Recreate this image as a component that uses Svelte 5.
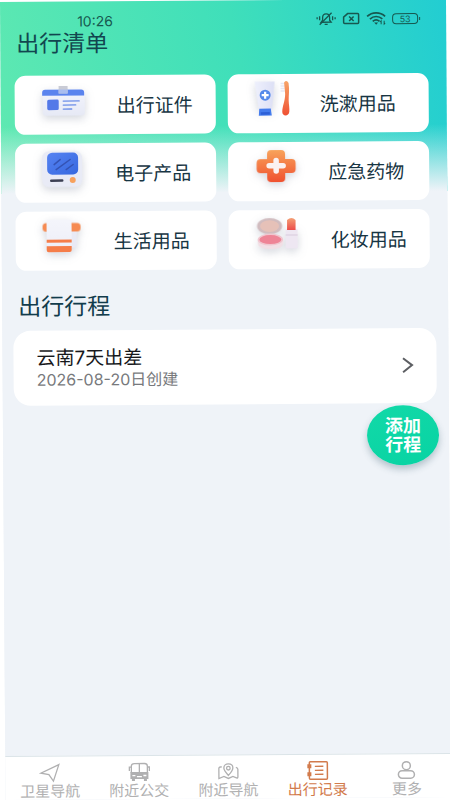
<script>
  let categories = [
    { name: '出行证件', icon: 'card', width: 62 },
    { name: '洗漱用品', icon: 'wash', width: 52 },
    { name: '电子产品', icon: 'device', width: 60 },
    { name: '应急药物', icon: 'medicine', width: 60 },
    { name: '生活用品', icon: 'towel', width: 58 },
    { name: '化妆用品', icon: 'makeup', width: 62 }
  ];

  let trips = [{ title: '云南7天出差', created: '2026-08-20' }];

  let tabs = [
    { name: '卫星导航', icon: 'arrow' },
    { name: '附近公交', icon: 'bus' },
    { name: '附近导航', icon: 'map' },
    { name: '出行记录', icon: 'record' },
    { name: '更多', icon: 'person' }
  ];

  let active = 'record';
</script>

<div class="screen">
  <div class="page">
    <header class="status">
      <span>10:26</span>
      <div class="status-icons">
        <svg width="20" height="14" viewBox="0 0 20 14" fill="none" stroke="currentColor" stroke-width="1.3">
          <path d="M5 10.500H15L13.500 8.500V6C13.500 3.500 12 2.200 10 2.200S6.500 3.500 6.500 6V8.500Z" />
          <path d="M8.500 12.700H11.500M3.500 13L15.500 1M3.500 4.500V8.500M1 5.500V7.500M16.500 4.500V8.500M19 5.500V7.500" />
        </svg>
        <svg width="18" height="14" viewBox="0 0 18 14" fill="none" stroke="currentColor" stroke-width="1.500">
          <path d="M5.500 2H15.500Q16.500 2 16.500 3V11Q16.500 12 15.500 12H2.500Q1.500 12 1.500 11V5.500Z" />
          <path d="M7 5L11.500 9.500M11.500 5L7 9.500" />
        </svg>
        <svg width="20" height="14" viewBox="0 0 20 14" fill="none" stroke="currentColor" stroke-width="1.700">
          <path d="M1 5C6 .3 14 .3 19 5M3.800 7.600C7.500 4.300 12.500 4.300 16.200 7.600M6.600 10C8.800 8.200 11.200 8.200 13.400 10" />
          <path d="M8 11.200L10 13.500L12 11.200Z" fill="currentColor" stroke="none" />
          <path d="M15 12.800V9.500L14 10.500M18 9.500V12.800L19 11.800" stroke-width="1" />
        </svg>
        <span class="battery">53</span>
      </div>
    </header>

    <h1>出行清单</h1>

    <div class="grid">
      {#each categories as { name, icon, width }}
        <button class="category">
          <svg {width} height="50" viewBox="0 0 {width} 50">
            {#if icon === 'card'}
              <linearGradient id="paper" x2="0" y2="1"><stop stop-color="#f3f5fd" /><stop offset="1" stop-color="#e6e9f5" /></linearGradient>
              <g class="lifted">
                <rect x="8" y="10" width="42" height="26" rx="3" fill="url(#paper)" />
              </g>
              <path d="M7.500 16V13Q7.500 10 10.500 10H46.500Q49.500 10 49.500 13V16Z" fill="#5b84ee" />
              <rect x="24" y="6.500" width="9" height="7.500" fill="#c9cbd5" />
              <rect x="24" y="10" width="9" height="4" fill="#a9bdf0" />
              <rect x="12.500" y="20" width="11.500" height="10.500" rx="1.500" fill="#5479e8" />
              <path d="M28.500 21.500H44.500M28.500 25.500H41M28.500 29.500H37" stroke="#6b8de8" stroke-width="1.300" stroke-linecap="round" />
            {:else if icon === 'wash'}
              <linearGradient id="tube" x2="1" y2="0"><stop stop-color="#eef0fc" /><stop offset="1" stop-color="#dcdff5" /></linearGradient>
              <linearGradient id="handle" x2="0" y2="1"><stop stop-color="#f7a468" /><stop offset="1" stop-color="#ef5133" /></linearGradient>
              <g class="lifted">
                <path d="M7 3.500H27L24 32H11Z" fill="url(#tube)" />
              </g>
              <path d="M11.500 30.500H23L24 37.500H11Z" fill="#437bed" />
              <path d="M13 34H22V36.500H13Z" fill="#2c5fd6" />
              <circle cx="17.500" cy="17" r="5.500" fill="#5489ea" />
              <path d="M17.500 13.500V20.500M14 17H21" stroke="#fff" stroke-width="2.200" />
              <path d="M33 5.500H37M33 8H37M33 10.500H37M33 13H37" stroke="#e6e8f3" stroke-width="1.500" />
              <path d="M36.500 4.500Q39 1.500 41 5C42 12 41 17 41 22C41 27 42 30 41.500 34C41 38.500 34.500 38.500 34.500 34C34.500 28 37.500 23 37.500 16Z" fill="url(#handle)" />
            {:else if icon === 'device'}
              <linearGradient id="glass" x2="1" y2="1"><stop stop-color="#5683f2" /><stop offset="1" stop-color="#3768df" /></linearGradient>
              <g class="lifted">
                <rect x="7" y="3.500" width="40" height="36" rx="7" fill="#e9ebf6" />
              </g>
              <rect x="12" y="5" width="31" height="22" rx="5" fill="url(#glass)" />
              <path d="M19 17L25 12M21 22L35 12M31 22L38 17" stroke="#3453b4" stroke-width="1.500" stroke-linecap="round" />
              <path d="M16 33H27" stroke="#3c4054" stroke-width="2.500" stroke-linecap="round" />
              <circle cx="37.500" cy="32.500" r="3" fill="#f7a15d" />
            {:else if icon === 'medicine'}
              <linearGradient id="cross" x2="0" y2="1"><stop stop-color="#f8a35b" /><stop offset="1" stop-color="#f0512f" /></linearGradient>
              <g class="lifted">
                <path d="M23 4H33Q37 4 37 8V13H43.500Q47.500 13 47.500 17V23Q47.500 27 43.500 27H37V32Q37 36 33 36H23Q19 36 19 32V27H12.500Q8.500 27 8.500 23V17Q8.500 13 12.500 13H19V8Q19 4 23 4Z" fill="url(#cross)" />
              </g>
              <path d="M28 14.500V25M21 19.700H35" stroke="#fbf1f0" stroke-width="5.500" stroke-linecap="round" />
            {:else if icon === 'towel'}
              <linearGradient id="cloth" x2="0" y2="1"><stop stop-color="#f4f5fb" /><stop offset="1" stop-color="#edeef8" /></linearGradient>
              <g class="lifted">
                <rect x="34" y="11" width="7" height="21" rx="2" fill="#e9eaf5" />
                <rect x="7" y="7.500" width="38" height="8.500" rx="3.500" fill="#f68b52" />
                <rect x="11" y="4" width="25" height="32.500" rx="2" fill="url(#cloth)" />
              </g>
              <path d="M11 24H36V27H11Z" fill="#f57d49" />
              <path d="M11 30.500H36V34.500Q36 36.500 34 36.500H13Q11 36.500 11 34.500Z" fill="#f57d49" />
            {:else}
              <linearGradient id="stick" x2="0" y2="1"><stop stop-color="#f4a075" /><stop offset="1" stop-color="#ec4d4a" /></linearGradient>
              <g class="lifted">
                <ellipse cx="21" cy="12" rx="12.500" ry="8" fill="#d1bcbf" />
                <path d="M9 25.500H34.500V29Q34 35 21.700 35T9 29Z" fill="#f1dfe5" />
                <rect x="37" y="15" width="12" height="19.500" rx="1" fill="#eee7f2" />
              </g>
              <ellipse cx="21" cy="12" rx="9.500" ry="5.800" fill="#e6c1b8" />
              <ellipse cx="21.700" cy="25.500" rx="12.700" ry="6" fill="#f0c6cf" />
              <ellipse cx="21.700" cy="25.500" rx="11" ry="4.500" fill="#ee8496" />
              <path d="M38.500 6Q43 2 47 6V16H38.500Z" fill="url(#stick)" />
              <path d="M37 21H49" stroke="#d8ccdc" stroke-width="1" />
            {/if}
          </svg>
          <span>{name}</span>
        </button>
      {/each}
    </div>

    <h2>出行行程</h2>

    {#each trips as { title, created }}
      <button class="trip">
        <span class="trip-text">
          <strong>{title}</strong>
          <small>{created}日创建</small>
        </span>
        <svg width="12" height="18" viewBox="0 0 12 18" fill="none" stroke="#5d5f63" stroke-width="2">
          <path d="M1.500 2L10.500 9L1.500 16" />
        </svg>
      </button>
    {/each}

    <button class="add">添加<br />行程</button>

    <nav>
      {#each tabs as { name, icon }}
        <a href="#{icon}" class:active={icon === active}>
          <svg width="24" height="20" viewBox="0 0 24 20" fill="none" stroke="currentColor" stroke-width="1.300">
            {#if icon === 'arrow'}
              <path d="M20.500 2L2.500 10.500L10.500 12L15 18.500Z" />
            {:else if icon === 'bus'}
              <path d="M4 11V4Q4 1.500 7 1.500H17Q20 1.500 20 4V11M12 1.500V11M4 5H2V9M20 5H22V9" />
              <path d="M3 10H21V17H19.500V19H16.500V17H7.500V19H4.500V17H3Z" fill="currentColor" stroke="none" />
              <path d="M5 13.500H8M16 13.500H19M9.500 14.500H14.500" stroke="#fff" />
            {:else if icon === 'map'}
              <path d="M12 14C9 10.500 7.500 8.800 7.500 6.500C7.500 4 9.500 2.500 12 2.500S16.500 4 16.500 6.500C16.500 8.800 15 10.500 12 14Z" />
              <circle cx="12" cy="6.800" r="1.800" />
              <path d="M5.500 5.500H4Q2.500 5.500 2.500 7V17L7.500 15L12 17L16.500 15L20 16.500Q21.500 17 21.500 15.500V8Q21.500 6.500 19.500 6" />
            {:else if icon === 'record'}
              <rect x="4" y="1" width="18" height="17.500" rx="1" stroke-width="1.500" />
              <path d="M9.500 5.500H18M9.500 9.500H18M9.500 13.500H18" />
              <path d="M2 5.500H6M2 13.500H6" stroke-width="4" />
            {:else}
              <circle cx="12" cy="5.500" r="4" stroke-width="1.500" />
              <rect x="4" y="10.500" width="16" height="7.500" rx="3.700" stroke-width="1.500" />
            {/if}
          </svg>
          <span>{name}</span>
        </a>
      {/each}
    </nav>
  </div>
</div>

<style>
  :global(body) {
    background-color: #fff;
  }

  .screen {
    box-sizing: border-box;
    min-height: 100vh;
    padding: 2px 4px 0 0;
    display: flex;
    overflow: hidden;
    font-family: Inter, 'Noto Sans CJK SC', sans-serif;
  }

  .page {
    flex: 1;
    display: flex;
    flex-direction: column;
    background:
      linear-gradient(to bottom, rgba(239, 243, 248, 0) 125px, #eff3f8 192px),
      linear-gradient(78deg, #5fe9b1 0, #3fdfba 55%, #22cdd2 100%) top / 100% 192px no-repeat,
      #eff3f8;
    transform: rotate(-0.4deg);
    transform-origin: top left;
  }

  button {
    font-family: inherit;
    border: none;
    cursor: pointer;
  }

  svg {
    flex: none;
    overflow: visible;
  }

  .status {
    display: flex;
    justify-content: space-between;
    align-items: center;
    height: 20px;
    padding: 9px 28px 0 77px;
    font-size: 14px;
    color: #17584f;
  }

  .status-icons {
    display: flex;
    align-items: center;
    gap: 6px;
  }

  .battery {
    position: relative;
    box-sizing: border-box;
    width: 26px;
    height: 11px;
    border: 1px solid currentColor;
    border-radius: 4px;
    font-size: 9px;
    line-height: 9px;
    text-align: center;
  }

  .battery::after {
    content: '';
    position: absolute;
    right: -3px;
    top: 3px;
    width: 1px;
    height: 3px;
    background-color: currentColor;
  }

  h1,
  h2 {
    margin: 0;
    font-size: 23px;
    line-height: 26px;
    font-weight: 400;
    color: #12464f;
  }

  h1 {
    padding-left: 16px;
  }

  h2 {
    padding: 23px 16px 11px;
    color: #123c4c;
  }

  .grid {
    display: grid;
    grid-template-columns: 1fr 1fr;
    gap: 9px 12px;
    padding: 19px 18px 0 14px;
  }

  .category {
    display: flex;
    align-items: center;
    gap: 20px;
    height: 59px;
    padding: 0 0 2px 20px;
    background-color: #fff;
    border-radius: 11px;
    font-size: 19px;
    color: #173543;
    white-space: nowrap;
  }

  .lifted {
    filter: drop-shadow(0 3px 4px rgba(80, 90, 120, 0.25));
  }

  .trip {
    display: flex;
    justify-content: space-between;
    align-items: center;
    margin: 0 12px 0 11px;
    padding: 16px 23px 17px;
    background-color: #fff;
    border-radius: 17px;
    text-align: left;
  }

  .trip-text {
    display: flex;
    flex-direction: column;
  }

  strong {
    font-size: 19px;
    line-height: 24px;
    font-weight: 400;
    color: #17181b;
  }

  small {
    font-size: 16px;
    line-height: 18px;
    color: #77797c;
  }

  .add {
    align-self: flex-end;
    width: 72px;
    height: 60px;
    margin: 2px 10px 0 0;
    padding: 0;
    background: linear-gradient(160deg, #12d9a8, #08d3a3);
    border-radius: 50%;
    box-shadow: 0 4px 7px rgba(40, 80, 100, 0.3);
    font-size: 18px;
    line-height: 19px;
    font-weight: 700;
    color: #fff;
  }

  nav {
    display: flex;
    margin-top: auto;
    background-color: #fff;
    border-top: 1px solid #dbe4e8;
  }

  nav a {
    flex: 1;
    display: flex;
    flex-direction: column;
    align-items: center;
    padding-top: 6px;
    font-size: 15px;
    line-height: 17px;
    color: #b0b0b1;
    text-decoration: none;
  }

  nav a.active {
    color: #d27b4c;
  }
</style>
